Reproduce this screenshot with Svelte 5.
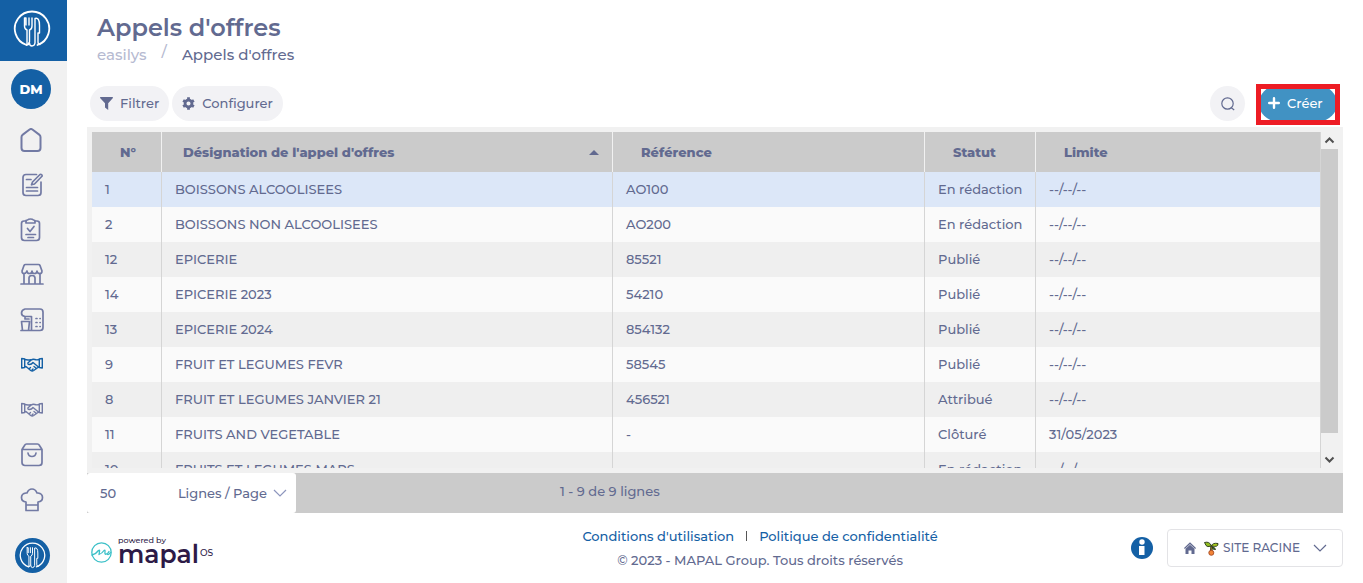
<script lang="ts">
  interface Tender {
    id: number;
    name: string;
    ref: string;
    status: string;
    deadline: string;
  }

  const tenders: Tender[] = [
    { id: 1, name: 'BOISSONS ALCOOLISEES', ref: 'AO100', status: 'En rédaction', deadline: '--/--/--' },
    { id: 2, name: 'BOISSONS NON ALCOOLISEES', ref: 'AO200', status: 'En rédaction', deadline: '--/--/--' },
    { id: 12, name: 'EPICERIE', ref: '85521', status: 'Publié', deadline: '--/--/--' },
    { id: 14, name: 'EPICERIE 2023', ref: '54210', status: 'Publié', deadline: '--/--/--' },
    { id: 13, name: 'EPICERIE 2024', ref: '854132', status: 'Publié', deadline: '--/--/--' },
    { id: 9, name: 'FRUIT ET LEGUMES FEVR', ref: '58545', status: 'Publié', deadline: '--/--/--' },
    { id: 8, name: 'FRUIT ET LEGUMES JANVIER 21', ref: '456521', status: 'Attribué', deadline: '--/--/--' },
    { id: 11, name: 'FRUITS AND VEGETABLE', ref: '-', status: 'Clôturé', deadline: '31/05/2023' },
    { id: 10, name: 'FRUITS ET LEGUMES MARS', ref: '-', status: 'En rédaction', deadline: '--/--/--' },
  ];

  const nav = ['home', 'edit', 'tasks', 'shop', 'machine', 'deal', 'deal2', 'bag', 'chef'];

  let selected = $state(1);
  let pageSize = $state('50');
</script>

{#snippet cutlery(size: number)}
  <svg width={size} height={size} viewBox="0 0 38 38" fill="none" stroke="#fff" stroke-width="1.4" stroke-linecap="round" stroke-linejoin="round">
    <path d="M13.500 35A17.200 17.200 0 1 1 24.500 35" stroke-width="1.8" />
    <path d="M11.500 8v8q0 3 2.500 4v14M11.500 8h1.500v7M16 8v7M19 8v8q0 3-2.500 4v12M13.500 35q2.500 0 2.500-2.500" />
    <path d="M16.500 33q0 3 2.500 3t3-3V8.500q4.500-1.500 4.500 7v7.500H25v9q0 2.500 2 2.500" />
  </svg>
{/snippet}

{#snippet chevron()}
  <svg class="chevron" width="14" height="8" viewBox="0 0 14 8" fill="none" stroke="currentColor" stroke-width="1.2">
    <path d="M1 1l6 6 6-6" />
  </svg>
{/snippet}

<div class="app">
  <aside class="sidebar">
    <a class="brand" href="#accueil" aria-label="Easilys">{@render cutlery(38)}</a>
    <button class="avatar">DM</button>
    <nav>
      {#each nav as icon}
        <a class="nav-link" class:active={icon === 'deal'} href="#{icon}" aria-label={icon}>
          <svg width="24" height="24" viewBox="0 0 24 24" fill="none" stroke="currentColor" stroke-width="1.7" stroke-linecap="round" stroke-linejoin="round">
            {#if icon === 'home'}
              <path d="M1.500 9q0-1.500 1.300-2.400L9.600 1.500q1.400-1 2.800 0l6.800 5.100q1.300 1 1.300 2.400V20q0 3-3 3h-13q-3 0-3-3z" stroke-width="2" />
            {:else if icon === 'edit'}
              <path d="M16.500 1.500H6Q3 1.500 3 4.500v15q0 3 3 3h12q3 0 3-3V9M6.500 6.500H11M6.500 14.500h11M6.500 18h11M12.500 9L20 1.500q2-.5 2.200 1.500L14.500 11l-3 .8z" />
            {:else if icon === 'tasks'}
              <path d="M6 3H4Q1.500 3 1.500 5.500v14q0 3 3 3h12q3 0 3-3v-14Q19.500 3 17 3h-2" />
              <path d="M6 5V3q0-1 1.500-1 1-1 3-1t3 1Q15 2 15 3v2zM7.500 10.500l2.500 3L14 8.500M6 16.500h9.500M8 19.500h5.500" />
            {:else if icon === 'shop'}
              <path d="M2 8l2-5.500q.5-1 1.500-1h13q1 0 1.500 1L22 8M2 8q0 2.500 2 2.500T7 8q0 2.500 2.500 2.500T12 8q0 2.500 2.500 2.500T17 8q0 2.500 3 2.500 2 0 2-2.500M4 11v9.500M20 11v9.500M1 21h22M9 20.500V15q0-2.500 3-2.500t3 2.500v5.500" />
            {:else if icon === 'machine'}
              <path d="M5 1h15q3 0 3 3v15.500q0 3-3 3h-8.500v-14H5Q1.500 8 1.500 5T5 1M5 8.500V11h4M1.500 13.500h8l-1 9h-6zM1 22.500h11M16 10.500h1M20 10.500h.2M16 14.500h1M20 14.500h.2M16 18.500h1M20 18.500h.2" />
            {:else if icon === 'deal' || icon === 'deal2'}
              <g stroke-width="1.400">
                <path d="M1.700 5.500L4.700 6v8.500l-3 .5zM22.300 5.500l-3 .5v8.500l3 .5z" />
                <path d="M4.700 6.500q3 .8 6 .2M19.300 6.500q-2.500.8-4.500 0-2-.8-3.500.5L8 9.800q-.5 1.700 1.200 1.700 2.500 0 3.800-2l5.500 4.500" />
                <path d="M4.700 13.500q1.500 0 2.500 1l3.500 3q1.500 1 3 0l3.500-2.500 2-1.200M9.500 15.500l1-1M12 17l1-1M14 13.500l2.500 2" />
              </g>
            {:else if icon === 'bag'}
              <path d="M2 6.500l2.500-4q.8-1.500 2-1.500h11q1.200 0 2 1.500L22 6.500v13q0 3-3 3H5q-3 0-3-3zM2 6.500h20M8 10q.5 3.500 4 3.500t4-3.500" />
            {:else}
              <path d="M6 22.500h12V14q4.500-.5 4.500-4.500T18 5h-1q-1.500-4-5-4T7 5H6Q1.500 5.500 1.500 9.500T6 14zM6 17h12" />
            {/if}
          </svg>
        </a>
      {/each}
    </nav>
    <a class="brand-round" href="#easilys" aria-label="Easilys">{@render cutlery(27)}</a>
  </aside>

  <div class="page">
    <header>
      <h1>Appels d'offres</h1>
      <div class="breadcrumb">
        <a href="#accueil">easilys</a>
        <span class="slash">/</span>
        <span>Appels d'offres</span>
      </div>
    </header>

    <div class="toolbar">
      <button class="pill">
        <svg width="13" height="13" viewBox="0 0 13 13" fill="currentColor"><path d="M.5 0h12q.8.500.2 1.200L8.200 6.200V13L5 10.500V6.200L.3 1.200Q-.3.500.5 0z" /></svg>
        Filtrer
      </button>
      <button class="pill">
        <svg width="13" height="13" viewBox="0 0 14 14"><circle cx="7" cy="7" r="3.700" fill="none" stroke="currentColor" stroke-width="3" /><path d="M7 .3v3M7 10.700v3M1.200 3.700l2.600 1.500M10.200 8.800l2.600 1.500M1.200 10.300l2.600-1.500M10.200 5.200l2.600-1.500" stroke="currentColor" stroke-width="3" /></svg>
        Configurer
      </button>
      <span class="spacer"></span>
      <button class="round" aria-label="Rechercher">
        <svg width="14" height="14" viewBox="0 0 14 14" fill="none" stroke="currentColor" stroke-width="1.200"><circle cx="6.500" cy="6.500" r="5.700" /><path d="M10 10.500l3.200 2.500" /></svg>
      </button>
      <div class="highlight">
        <button class="create">
          <svg width="12" height="12" viewBox="0 0 12 12" stroke="currentColor" stroke-width="2.400" stroke-linecap="round"><path d="M6 1.200v9.600M1.200 6h9.600" /></svg>
          Créer
        </button>
      </div>
    </div>

    <main class="panel">
      <div class="rows">
        <table>
          <colgroup>
            <col class="c-id" /><col class="c-name" /><col class="c-ref" /><col class="c-status" /><col class="c-date" />
          </colgroup>
          <thead>
            <tr>
              <th>N°</th>
              <th>
                <div class="sorted">
                  Désignation de l'appel d'offres
                  <svg width="10" height="5" viewBox="0 0 10 5" fill="currentColor"><path d="M5 0l5 5H0z" /></svg>
                </div>
              </th>
              <th>Référence</th>
              <th>Statut</th>
              <th>Limite</th>
            </tr>
          </thead>
          <tbody>
            {#each tenders as t}
              <tr class:selected={t.id === selected} onclick={() => (selected = t.id)}>
                <td>{t.id}</td>
                <td>{t.name}</td>
                <td>{t.ref}</td>
                <td>{t.status}</td>
                <td>{t.deadline}</td>
              </tr>
            {/each}
          </tbody>
        </table>
      </div>
      <div class="scrollbar" aria-hidden="true">
        <svg width="17" height="17" viewBox="0 0 17 17" fill="none" stroke="#505050" stroke-width="2"><path d="M4.500 10.500l4-4 4 4" /></svg>
        <div class="track"><div class="thumb"></div></div>
        <svg width="17" height="17" viewBox="0 0 17 17" fill="none" stroke="#505050" stroke-width="2"><path d="M4.500 6.500l4 4 4-4" /></svg>
      </div>
    </main>

    <div class="pager">
      <div class="page-size">
        <select id="page-size" bind:value={pageSize}>
          <option>50</option>
          <option>100</option>
        </select>
        <label for="page-size">Lignes / Page</label>
        {@render chevron()}
      </div>
      <span class="count">1 - 9 de 9 lignes</span>
    </div>

    <footer>
      <div class="mapal">
        <svg width="21" height="21" viewBox="0 0 21 21" fill="none" stroke="#3cc0c8" stroke-width="1.300" stroke-linecap="round" stroke-linejoin="round">
          <circle cx="10.500" cy="10.500" r="9.700" />
          <path d="M1 13Q5 12 7.500 8.500 9 7.500 8.500 9.500L8 12.500q3-1 5-4 1.300-1 1 1-.5 3.500 1.500 2.500 2-1 2.500-2.500M19.500 10.500q-1.500 2.500-3 2" />
        </svg>
        <div class="wordmark">
          <span class="powered">powered by</span>
          <span class="name">mapal<sup>OS</sup></span>
        </div>
      </div>
      <div class="legal">
        <div class="links">
          <a href="#conditions">Conditions d'utilisation</a>
          <span class="bar"></span>
          <a href="#confidentialite">Politique de confidentialité</a>
        </div>
        <p>© 2023 - MAPAL Group. Tous droits réservés</p>
      </div>
      <div class="site-area">
        <button class="info" aria-label="Informations">
          <svg width="22" height="22" viewBox="0 0 22 22"><circle cx="11" cy="11" r="11" fill="#1460a5" /><circle cx="11" cy="5" r="2.700" fill="#fff" /><path d="M8 9h5.500v9H8z" fill="#fff" /></svg>
        </button>
        <div class="site">
          <svg width="12" height="12" viewBox="0 0 12 12" fill="currentColor"><path d="M6 2.800l4.500 4V12H7.500V8.500h-3V12h-3V6.800z" /><path d="M.4 6.500L6 1.200l5.600 5.300" fill="none" stroke="currentColor" stroke-width="1.200" /></svg>
          <svg class="sprout" width="15" height="15" viewBox="0 0 15 15" stroke="#26351c" stroke-width=".9">
            <path d="M6.500 10.500L6.800 5l1.500.3L8 11z" fill="#cb8d25" />
            <path d="M.5 1.500q5-1.500 7 3.500-4.500 1.500-5.500-.5z" fill="#91bd20" />
            <path d="M7.500 5q1-3.500 6.500-2.500.5 4-6.500 2.500z" fill="#a9c91c" />
            <path d="M8 6q3 0 3.500 2.500Q8.500 9 8 6z" fill="#599120" />
            <circle cx="7.300" cy="11.800" r="2.500" fill="#f38436" stroke="#a54b24" />
          </svg>
          <select aria-label="Site">
            <option>SITE RACINE</option>
          </select>
          {@render chevron()}
        </div>
      </div>
    </footer>
  </div>
</div>

<style>
  :global(body) {
    background: #fff;
  }

  .app {
    display: flex;
    height: 100vh;
    overflow: hidden;
    color: #626a90;
    font-family: Montserrat, Inter, sans-serif;
    font-size: 13px;
    font-weight: 500;
    line-height: 20px;
  }

  a {
    text-decoration: none;
  }

  button,
  select {
    border: none;
    color: inherit;
    font: inherit;
    cursor: pointer;
  }

  select {
    appearance: none;
    background: none;
    padding: 0;
  }

  svg {
    display: block;
    flex-shrink: 0;
  }

  /* sidebar */
  .sidebar {
    display: flex;
    flex-direction: column;
    align-items: center;
    width: 67px;
    flex-shrink: 0;
    background: #f1f1f1;
  }

  .brand {
    display: flex;
    align-items: center;
    justify-content: center;
    align-self: stretch;
    box-sizing: border-box;
    height: 61px;
    padding: 0 4px 4px 0;
    margin-bottom: 8px;
    background: #1460a5;
    flex-shrink: 0;
  }

  .avatar {
    width: 40px;
    height: 40px;
    margin: 0 5px 8px 0;
    padding: 0;
    border-radius: 50%;
    background: #1460a5;
    color: #fff;
    font-weight: 800;
    flex-shrink: 0;
  }

  nav {
    display: flex;
    flex-direction: column;
  }

  .nav-link {
    display: flex;
    align-items: center;
    height: 45px;
    padding-right: 3px;
    color: #727aa4;
  }

  .nav-link.active {
    color: #1460a5;
  }

  .brand-round {
    display: flex;
    align-items: center;
    justify-content: center;
    width: 35px;
    height: 35px;
    margin: auto 3px 10px 0;
    border-radius: 50%;
    background: #1460a5;
    flex-shrink: 0;
  }

  /* page */
  .page {
    flex: 1;
    min-width: 0;
    display: flex;
    flex-direction: column;
    padding: 14px 20px 0;
  }

  header {
    padding-left: 10px;
  }

  h1 {
    margin: 0;
    font-size: 24px;
    font-weight: 600;
    line-height: 28px;
  }

  .breadcrumb {
    display: flex;
    gap: 15px;
    font-size: 15px;
    line-height: 26px;
  }

  .breadcrumb a,
  .slash {
    color: #b6bad1;
  }

  .slash {
    line-height: 20px;
  }

  .toolbar {
    display: flex;
    align-items: center;
    gap: 3px;
    padding: 18px 6px 6px 3px;
  }

  .pill,
  .create {
    display: flex;
    align-items: center;
    gap: 7px;
    height: 35px;
    padding: 0 10px 1px;
    border-radius: 18px;
    background: #f2f2f5;
  }

  .spacer {
    flex: 1;
  }

  .round {
    display: flex;
    align-items: center;
    justify-content: center;
    width: 35px;
    height: 35px;
    padding: 0;
    border-radius: 50%;
    background: #f2f2f5;
  }

  .highlight {
    position: relative;
    margin-left: 11px;
  }

  .highlight::after {
    content: '';
    position: absolute;
    inset: -2px -3px -4px;
    border: 5px solid #ed1c24;
    pointer-events: none;
  }

  .create {
    width: 78px;
    padding: 0 9px 1px;
    background: #4192c3;
    color: #fff;
  }

  .panel {
    flex: 1;
    min-height: 0;
    display: flex;
    padding: 5px;
    background: #f1f1f1;
  }

  .rows {
    flex: 1;
    min-width: 0;
    overflow: hidden;
    border-right: 1px solid #d5d5d5;
  }

  table {
    width: 100%;
    table-layout: fixed;
    border-collapse: separate;
    border-spacing: 0;
  }

  .c-id {
    width: 70px;
  }

  .c-ref {
    width: 312px;
  }

  .c-status {
    width: 111px;
  }

  .c-date {
    width: 284px;
  }

  th,
  td {
    height: 35px;
    box-sizing: border-box;
    padding: 0 0 1px 13px;
    border-right: 1px solid #d5d5d5;
    text-align: left;
    white-space: nowrap;
  }

  th:last-child,
  td:last-child {
    border-right: none;
  }

  th {
    height: 40px;
    padding: 0 0 0 28px;
    border-color: #f1f1f1;
    background: #cbcbcb;
    font-weight: 800;
  }

  th:nth-child(2) {
    padding-left: 21px;
  }

  .sorted {
    display: flex;
    align-items: center;
    justify-content: space-between;
    padding-right: 13px;
  }

  tbody tr {
    background: #fafafa;
  }

  tbody tr:nth-child(odd) {
    background: #efefef;
  }

  tbody tr.selected {
    background: #dce7f8;
  }

  .scrollbar {
    display: flex;
    flex-direction: column;
    width: 17px;
    background: #f1f1f1;
  }

  .track {
    flex: 1;
  }

  .thumb {
    height: 94%;
    background: #cbcbcb;
  }

  .pager {
    display: flex;
    height: 40px;
    background: #cbcbcb;
  }

  .page-size {
    display: flex;
    align-items: center;
    box-sizing: border-box;
    width: 209px;
    padding: 0 9px 0 13px;
    border-radius: 3px;
    background: #fff;
  }

  .page-size select {
    flex: 1;
    min-width: 0;
  }

  .page-size .chevron {
    margin-left: 6px;
    color: #8d96bd;
  }

  .count {
    margin-left: 264px;
    line-height: 37px;
  }

  footer {
    display: grid;
    grid-template-columns: 11fr auto 9fr;
    align-items: center;
    height: 70px;
  }

  .mapal {
    display: flex;
    align-items: center;
    gap: 6px;
    padding: 8px 0 0 4px;
  }

  .wordmark {
    display: flex;
    flex-direction: column;
    padding-bottom: 4px;
    color: #2d1a47;
  }

  .powered {
    font-size: 8px;
    line-height: 8px;
  }

  .name {
    display: flex;
    gap: 1px;
    font-size: 25px;
    font-weight: 600;
    line-height: 20px;
  }

  sup {
    font-size: 9px;
    font-weight: 500;
    line-height: 18px;
  }

  .legal {
    text-align: center;
  }

  .legal p {
    margin: 4px 0 0;
  }

  .links {
    display: flex;
    align-items: center;
    gap: 12px;
  }

  .links a {
    color: #1460a5;
  }

  .bar {
    width: 1px;
    height: 10px;
    background: #555;
  }

  .site-area {
    display: flex;
    align-items: center;
    justify-content: flex-end;
    gap: 14px;
  }

  .info {
    padding: 0;
    background: none;
  }

  .site {
    display: flex;
    align-items: center;
    box-sizing: border-box;
    width: 176px;
    height: 38px;
    padding: 0 15px 0 16px;
    border: 1px solid #e3e3e6;
    border-radius: 4px;
  }

  .sprout {
    margin: 0 4px 0 8px;
  }

  .site select {
    flex: 1;
    min-width: 0;
    font-size: 12px;
  }
</style>
